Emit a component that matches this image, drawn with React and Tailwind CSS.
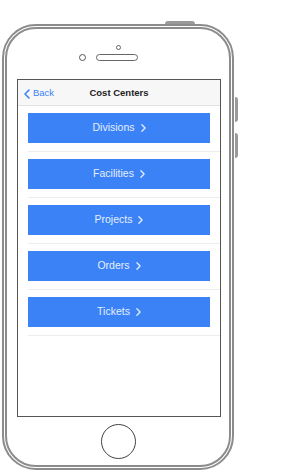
import React from 'react';

const items = ['Divisions', 'Facilities', 'Projects', 'Orders', 'Tickets'];

function Chevron({ className, left }) {
  return (
    <svg viewBox="0 0 6 10" className={className} fill="none" stroke="currentColor" strokeWidth="1.6" strokeLinecap="round" strokeLinejoin="round">
      <path d={left ? 'M5 1L1 5l4 4' : 'M1 1l4 4-4 4'} />
    </svg>
  );
}

export default function App() {
  return (
    <div className="w-[281px] h-[473px] bg-white overflow-hidden" style={{ fontFamily: '"Liberation Sans", Arial, sans-serif' }}>
      <div className="relative ml-[2px] mt-[24px] w-[232px] h-[446px] rounded-[34px] border-[5px] border-double border-[#8c8c8c] flex flex-col">
        {/* hardware buttons */}
        <div className="absolute -top-[8px] left-[158px] w-[30px] h-[3px] rounded-t-sm bg-[#9a9a9a]" />
        <div className="absolute -right-[9px] top-[68px] w-[3px] h-[25px] rounded-r-sm bg-[#9a9a9a]" />
        <div className="absolute -right-[9px] top-[104px] w-[3px] h-[25px] rounded-r-sm bg-[#9a9a9a]" />

        {/* top speaker area */}
        <div className="h-[50px] flex flex-col items-center">
          <div className="mt-[16px] w-[5px] h-[5px] rounded-full border border-[#666]" />
          <div className="mt-[4px] flex items-center gap-[10px] -ml-[20px]">
            <div className="w-[7px] h-[7px] rounded-full border-[1.5px] border-[#555]" />
            <div className="w-[42px] h-[7px] rounded-full border-[1.5px] border-[#666]" />
          </div>
        </div>

        {/* screen */}
        <div className="ml-[10px] w-[204px] h-[338px] border border-[#555] bg-white flex flex-col overflow-hidden">
          <div className="h-[26px] shrink-0 bg-[#f7f7f7] border-b border-[#e2e2e2] flex items-center relative">
            <div className="flex items-center gap-[3px] pl-[6px] pt-[2px] text-[#3b82f6] text-[9.5px]">
              <Chevron left className="w-[6px] h-[10px]" />
              <span>Back</span>
            </div>
            <div className="absolute inset-0 pt-[2px] flex items-center justify-center text-[9.5px] font-bold text-[#222]">Cost Centers</div>
          </div>
          <div className="flex flex-col pl-[10px]">
            {items.map((label) => (
              <div key={label} className="pt-[7px] pb-[8px] border-b border-[#ececec]">
                <button className="w-[182px] h-[30px] bg-[#3b82f6] text-[#e4eeff] text-[10.5px] flex items-center justify-center gap-[6px]">
                  <span>{label}</span>
                  <Chevron className="w-[5px] h-[8px]" />
                </button>
              </div>
            ))}
          </div>
        </div>

        {/* home button */}
        <div className="flex-1 flex items-center justify-center">
          <div className="w-[35px] h-[35px] rounded-full border-[1.5px] border-[#444]" />
        </div>
      </div>
    </div>
  );
}
